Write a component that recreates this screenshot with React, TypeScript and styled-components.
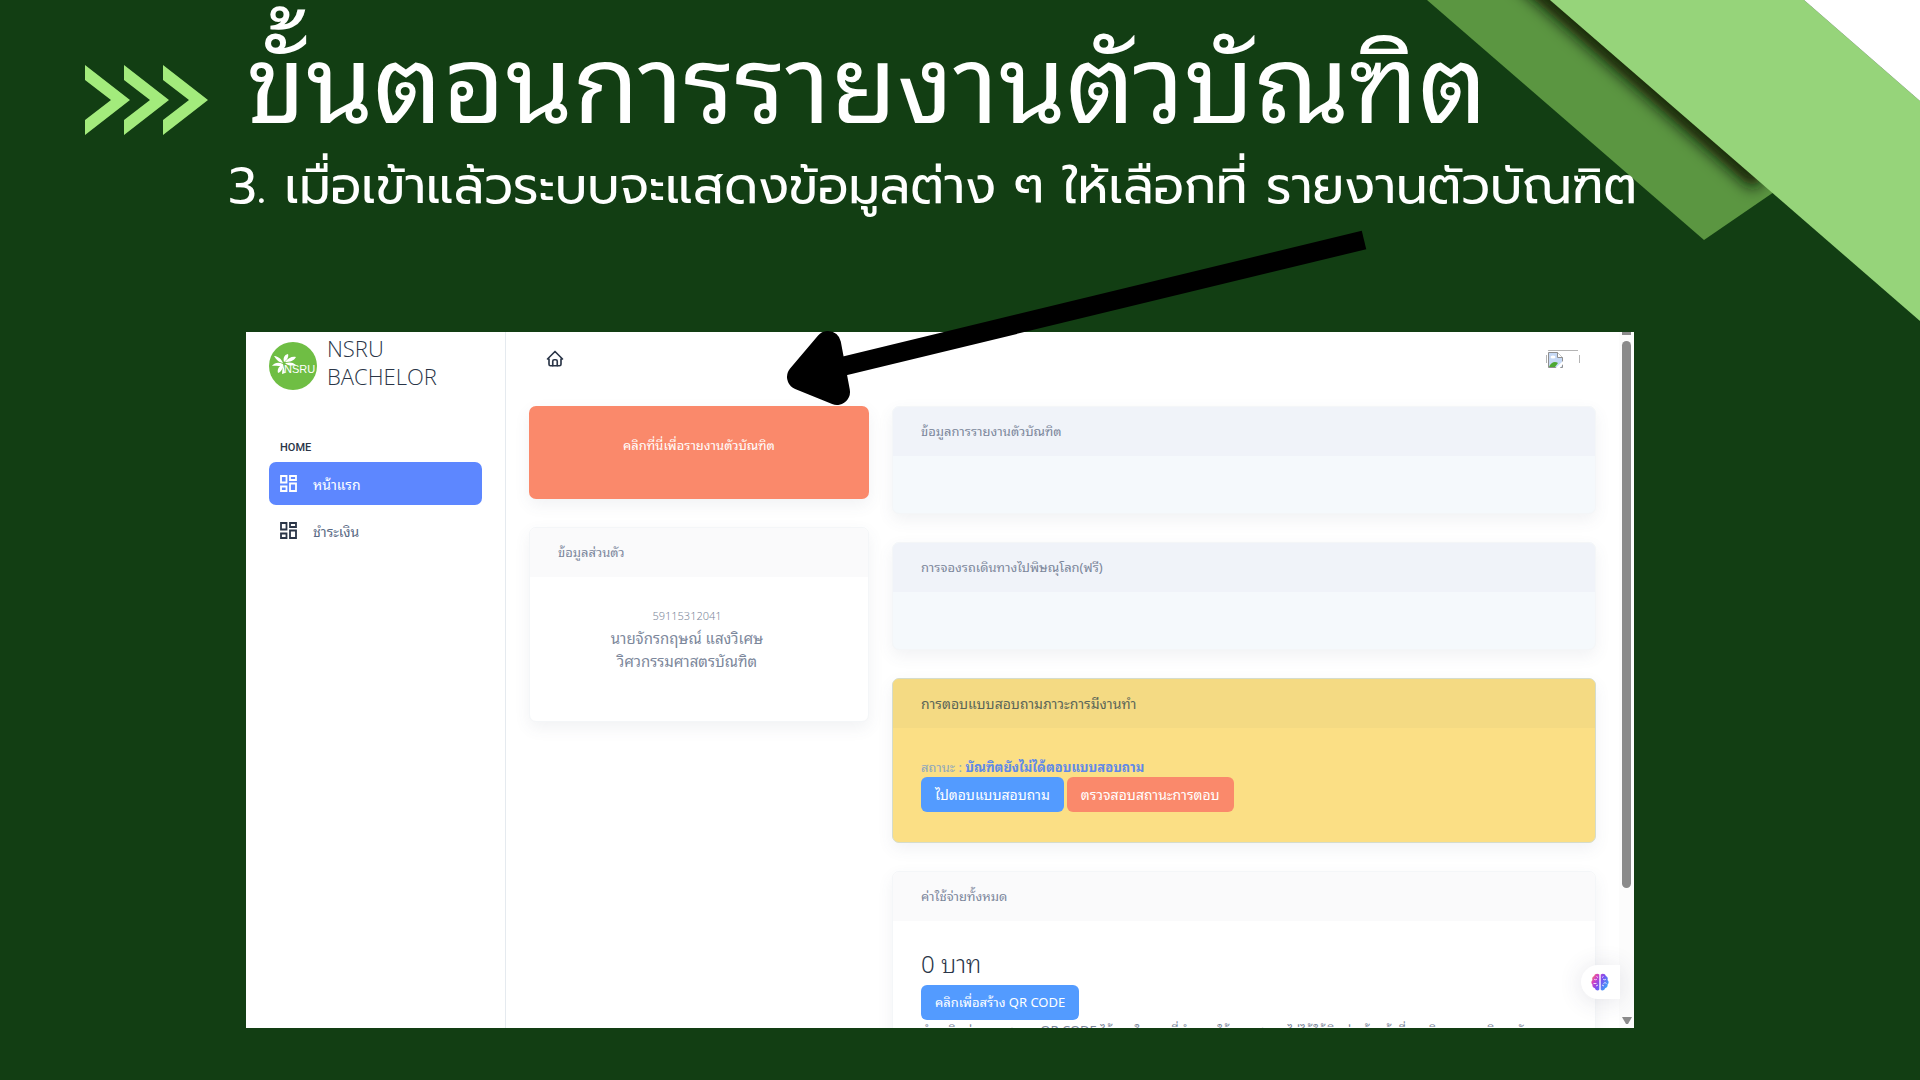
import React from "react";
import styled, { createGlobalStyle } from "styled-components";

const thai = `"Noto Sans Thai Looped", "Noto Looped Thai", "Sarabun", "Noto Sans", sans-serif`;
const loopless = `"Prompt", "Kanit", "Noto Sans", sans-serif`;

const Global = createGlobalStyle`
  * { box-sizing: border-box; }
  body { margin: 0; background: #123e13; font-family: ${thai}; }
  h1, h2, h3, p { margin: 0; font-weight: 400; }
`;

const Slide = styled.main`
  position: relative;
  display: flex;
  flex-direction: column;
  height: 100vh;
  min-height: 720px;
  overflow: hidden;
  background: #123e13;
`;
const Corner = styled.svg`
  position: absolute;
  top: 0;
  right: 0;
`;
const Heading = styled.header`
  position: relative;
  flex: none;
  height: 332px;
  padding-left: 85px;
`;
const TitleRow = styled.div`
  display: flex;
  align-items: center;
  gap: 38px;
  height: 150px;
  padding-top: 50px;
`;
const Title = styled.h1`
  padding-bottom: 50px;
  color: #fff;
  font-size: 108px;
  line-height: 80px;
  white-space: nowrap;
`;
const Subtitle = styled.h2`
  padding-left: 143px;
  color: #fff;
  font-family: ${loopless};
  font-size: 50px;
  line-height: 72px;
  white-space: nowrap;
`;
const Arrow = styled.svg`
  position: absolute;
  left: 780px;
  top: 224px;
  z-index: 3;
`;
const Shot = styled.section`
  position: relative;
  flex: 1;
  min-height: 0;
  display: flex;
  margin: 0 286px 52px 246px;
  overflow: hidden;
  background: #fff;
`;
const Sidebar = styled.nav`
  flex: none;
  width: 260px;
  padding: 4px 23px 0;
  border-right: 1px solid #e5eaef;
`;
const Brand = styled.div`
  display: flex;
  align-items: center;
  gap: 10px;
  height: 60px;
`;
const BrandName = styled.h3`
  padding-bottom: 8px;
  color: #2a3547;
  font-family: "Open Sans", sans-serif;
  font-weight: 300;
  font-size: 22px;
  line-height: 28px;
`;
const MenuLabel = styled.p`
  margin-top: 42px;
  padding-left: 11px;
  color: #2a3547;
  font-family: Roboto, sans-serif;
  font-weight: 500;
  font-size: 11px;
  line-height: 20px;
`;
const MenuLink = styled.a<{ $active?: boolean }>`
  display: flex;
  align-items: center;
  gap: 16px;
  height: 43px;
  margin: 4px 0 1px;
  padding-left: 11px;
  border-radius: 7px;
  background: ${(p) => (p.$active ? "#5d87ff" : "transparent")};
  color: ${(p) => (p.$active ? "#fff" : "#5a6a85")};
  font-size: 14px;
  text-decoration: none;
  svg { color: ${(p) => (p.$active ? "#fff" : "#2a3547")}; }
`;
const Content = styled.div`
  flex: 1;
  min-width: 0;
  padding: 0 23px;
`;
const Topbar = styled.div`
  display: flex;
  justify-content: space-between;
  padding: 18px 16px 0 17px;
  height: 74px;
`;
const HomeLink = styled.a`
  color: #2a3547;
  svg { display: block; }
`;
const Columns = styled.div`
  display: grid;
  grid-template-columns: minmax(0, 340fr) minmax(0, 704fr);
  gap: 23px;
`;
const Stack = styled.div`
  display: flex;
  flex-direction: column;
  gap: 28px;
`;
const ReportButton = styled.button`
  height: 93px;
  padding: 0 0 16px;
  border: 0;
  border-radius: 7px;
  background: #fa896b;
  box-shadow: 0 6px 16px rgba(80, 90, 110, 0.08);
  color: #fff;
  font-family: ${thai};
  font-size: 13px;
`;
type Tone = "plain" | "cool" | "warm";
const heads = { plain: "#fafafb", cool: "#f0f3f9", warm: "#f4da83" };
const bodies = { plain: "#fff", cool: "#f5f9fc", warm: "#fbdf85" };
const Card = styled.section<{ $tone: Tone }>`
  border: 1px solid ${(p) => (p.$tone === "warm" ? "#d5dccb" : "#f4f6f8")};
  border-radius: 7px;
  background: ${(p) => bodies[p.$tone]};
  box-shadow: 0 6px 16px rgba(80, 90, 110, 0.08);
  overflow: hidden;
`;
const CardHead = styled.h3<{ $tone: Tone }>`
  padding: 0 28px 2px;
  background: ${(p) => heads[p.$tone]};
  color: ${(p) => (p.$tone === "warm" ? "#5b6658" : "#7c879b")};
  font-size: ${(p) => (p.$tone === "warm" ? 14 : 13)}px;
  line-height: 47px;
`;
const CardBody = styled.div<{ $h: number }>`
  min-height: ${(p) => p.$h}px;
  padding: 29px 28px 28px;
`;
const Person = styled(CardBody)`
  padding: 29px 52px 0 28px;
  color: #7c879b;
  text-align: center;
  font-size: 15px;
  line-height: 23px;
`;
const StudentId = styled.p`
  font-family: "Noto Sans", sans-serif;
  font-weight: 300;
  font-size: 11px;
  line-height: 20px;
`;
const Status = styled.p`
  color: #8da6bd;
  font-size: 13px;
  line-height: 20px;
  b { color: #6089e8; }
`;
const Actions = styled.div`
  display: flex;
  gap: 3px;
`;
const Action = styled.button<{ $red?: boolean; $size: number }>`
  height: 35px;
  padding: 0 14px 2px;
  border: 0;
  border-radius: 6px;
  background: ${(p) => (p.$red ? "#fa896b" : "#539bff")};
  color: #fff;
  font-family: ${thai};
  font-size: ${(p) => p.$size}px;
  white-space: nowrap;
`;
const Amount = styled.p`
  padding-bottom: 11px;
  color: #2a3547;
  font-weight: 300;
  font-size: 24px;
  line-height: 24px;
`;
const Note = styled.p`
  color: #7c879b;
  font-size: 13px;
  line-height: 20px;
  white-space: nowrap;
`;
const Scroll = styled.div`
  flex: none;
  display: flex;
  flex-direction: column;
  align-items: center;
  width: 15px;
  padding-bottom: 3px;
  background: #fcfcfc;
`;
const ScrollCap = styled.div`
  width: 9px;
  height: 3px;
  background: #8b8b8b;
`;
const Thumb = styled.div`
  width: 9px;
  margin: 6px 0 auto;
  flex: 0 0 79%;
  border-radius: 5px;
  background: #8b8b8b;
`;
const Assistant = styled.button`
  position: absolute;
  right: 14px;
  bottom: 29px;
  width: 39px;
  height: 34px;
  padding: 0 0 0 10px;
  border: 0;
  border-radius: 17px 0 0 17px;
  background: #fff;
  box-shadow: 0 2px 24px rgba(60, 60, 90, 0.14);
  text-align: left;
  svg { display: block; }
`;

const GridIcon = () => (
  <svg width="17" height="17" viewBox="0 0 17 17" fill="none" stroke="currentColor" strokeWidth="1.8">
    <path d="M1 1h5.500v6.500H1zM1 11.500h5.500V16H1zM10 1h6v4h-6zM10 8.500h6V16h-6z" />
  </svg>
);
const HomeIcon = () => (
  <svg width="18" height="18" viewBox="0 0 24 24" fill="none" stroke="currentColor" strokeWidth="2.200" strokeLinecap="round" strokeLinejoin="round">
    <path d="M4 12H2l10-10 10 10h-2M4 12v7a2 2 0 0 0 2 2h12a2 2 0 0 0 2-2v-7" />
    <path d="M9 21v-6a2 2 0 0 1 2-2h2a2 2 0 0 1 2 2v6" />
  </svg>
);
const BrokenPicture = () => (
  <svg width="34" height="20" viewBox="0 0 34 20" role="img" aria-label="profile">
    <path d="M2 .5h30M.5 5v8M33.500 5v8" stroke="#b4b4b4" fill="none" />
    <path d="M2.500 2.500h9l5 5V17.500h-14z" fill="#c6d9f5" stroke="#8f8f8f" />
    <path d="M11.500 2.500v5h5" fill="#fff" stroke="#8f8f8f" />
    <ellipse cx="7" cy="7" rx="2.500" ry="1.500" fill="#fff" />
    <path d="M3 17c2-5 6-6 9-4l-3 4z" fill="#4da832" />
    <path d="M9 18.500l8.500-8v3l-4 5z" fill="#fff" />
  </svg>
);
const Logo = () => (
  <svg width="48" height="48" viewBox="0 0 48 48" role="img" aria-label="NSRU">
    <circle cx="24" cy="24" r="24" fill="#6fbe44" />
    <g fill="#fff">
      <path d="M14 22C10 20 6 20 3 24c4-1 6 1 11-1zM14 21C12 16 8 14 5 14c2 3 4 6 9 7zM15 20c-1-4 0-7 4-8 1 3-1 6-4 8zM16 20c3-4 7-6 11-5-2 4-6 5-11 5zM16 21c4-1 8-1 11 2-4 1-8 1-11-2zM14 22c-4 2-6 5-5 9 3-1 5-4 5-9zM14 22l2 9-3 1z" />
      <text x="15" y="31" fontFamily="Liberation Sans" fontSize="11">NSRU</text>
    </g>
  </svg>
);
const Brain = () => (
  <svg width="18" height="18" viewBox="0 0 18 18" aria-hidden="true">
    <defs>
      <linearGradient id="brain" x1="0" y1="0" x2="1" y2=".6">
        <stop offset="0" stopColor="#ff9a3c" />
        <stop offset=".3" stopColor="#d43fc4" />
        <stop offset=".6" stopColor="#7a4ff0" />
        <stop offset="1" stopColor="#3fa0f8" />
      </linearGradient>
    </defs>
    <path fill="url(#brain)" d="M8.300 1.500C6.500 0 3.500.8 3.200 3 1.200 3.600.8 5.800 1.500 7 0 8.300 0 10.500 1.400 11.500c-.3 2.200 1 3.500 2.500 3.700.8 2.400 3.400 2.800 4.400 1.300zM9.700 1.500c1.800-1.500 4.800-.7 5.100 1.500 2 .6 2.400 2.800 1.700 4 1.500 1.300 1.500 3.500.1 4.500.3 2.200-1 3.500-2.500 3.700-.8 2.400-3.400 2.800-4.400 1.300z" />
    <path d="M3 6c1 1 2 1 3 0M2.500 10.500h3M5 13l2-1M15 6c-1 1-2 1-3 0M15.500 10.500c-1-1-2-1-3 0M13 13l-2-1M5.500 3.500l1.500 1M12.500 3.500l-1.500 1" stroke="#fff" strokeWidth=".8" fill="none" />
  </svg>
);

export default function App() {
  return (
    <>
      <Global />
      <Slide>
        <Corner width="494" height="322" viewBox="1426 0 494 322" aria-hidden="true">
          <defs>
            <clipPath id="band">
              <path d="M1427 0L1704 240L1774 192L1550 0z" />
            </clipPath>
            <filter id="soft" filterUnits="userSpaceOnUse" x="1400" y="-100" width="500" height="400">
              <feGaussianBlur stdDeviation="8" />
            </filter>
          </defs>
          <path d="M1427 0L1704 240L1774 192L1550 0z" fill="#5b9641" />
          <g clipPath="url(#band)">
            <path d="M1492 -50L1760 182" stroke="#0a1405" strokeWidth="20" filter="url(#soft)" />
          </g>
          <path d="M1550 0H1804L1920 101V321z" fill="#96d47a" />
          <path d="M1804 0H1920V101z" fill="#fff" />
        </Corner>
        <Heading>
          <TitleRow>
            <svg width="123" height="70" viewBox="0 0 123 70" fill="#a3eb7c" aria-hidden="true">
              <path d="M0 0L45 35L0 70V55L26 35L0 15zM39 0L84 35L39 70V55L65 35L39 15zM78 0L123 35L78 70V55L104 35L78 15z" />
            </svg>
            <Title>ขั้นตอนการรายงานตัวบัณฑิต</Title>
          </TitleRow>
          <Subtitle>3. เมื่อเข้าแล้วระบบจะแสดงข้อมูลต่าง ๆ ให้เลือกที่ รายงานตัวบัณฑิต</Subtitle>
        </Heading>
        <Arrow width="590" height="190" viewBox="780 224 590 190" aria-hidden="true">
          <path d="M1364 240L840 367" stroke="#000" strokeWidth="19" />
          <path d="M800 377L828 344L837 392z" stroke="#000" strokeWidth="26" strokeLinejoin="round" />
        </Arrow>
        <Shot>
          <Sidebar>
            <Brand>
              <Logo />
              <BrandName>NSRU<br />BACHELOR</BrandName>
            </Brand>
            <MenuLabel>HOME</MenuLabel>
            <MenuLink href="#home" $active><GridIcon />หน้าแรก</MenuLink>
            <MenuLink href="#pay"><GridIcon />ชำระเงิน</MenuLink>
          </Sidebar>
          <Content>
            <Topbar>
              <HomeLink href="#top" aria-label="Home"><HomeIcon /></HomeLink>
              <BrokenPicture />
            </Topbar>
            <Columns>
              <Stack>
                <ReportButton>คลิกที่นี่เพื่อรายงานตัวบัณฑิต</ReportButton>
                <Card $tone="plain">
                  <CardHead $tone="plain">ข้อมูลส่วนตัว</CardHead>
                  <Person $h={144}>
                    <StudentId>59115312041</StudentId>
                    <p>นายจักรกฤษณ์ แสงวิเศษ</p>
                    <p>วิศวกรรมศาสตรบัณฑิต</p>
                  </Person>
                </Card>
              </Stack>
              <Stack>
                <Card $tone="cool">
                  <CardHead $tone="cool">ข้อมูลการรายงานตัวบัณฑิต</CardHead>
                  <CardBody $h={57} />
                </Card>
                <Card $tone="cool">
                  <CardHead $tone="cool">การจองรถเดินทางไปพิษณุโลก(ฟรี)</CardHead>
                  <CardBody $h={57} />
                </Card>
                <Card $tone="warm">
                  <CardHead $tone="warm">การตอบแบบสอบถามภาวะการมีงานทำ</CardHead>
                  <CardBody $h={114}>
                    <Status>สถานะ : <b>บัณฑิตยังไม่ได้ตอบแบบสอบถาม</b></Status>
                    <Actions>
                      <Action $size={14}>ไปตอบแบบสอบถาม</Action>
                      <Action $size={14} $red>ตรวจสอบสถานะการตอบ</Action>
                    </Actions>
                  </CardBody>
                </Card>
                <Card $tone="plain">
                  <CardHead $tone="plain">ค่าใช้จ่ายทั้งหมด</CardHead>
                  <CardBody $h={160}>
                    <Amount>0 บาท</Amount>
                    <Action $size={13}>คลิกเพื่อสร้าง QR CODE</Action>
                    <Note>ชำระเงินผ่านการสแกน QR CODE ได้ภายในเวลาที่กำหนดให้ หากสแกนไม่ได้ให้ติดต่อเจ้าหน้าที่การเงินของมหาวิทยาลัย</Note>
                  </CardBody>
                </Card>
              </Stack>
            </Columns>
          </Content>
          <Scroll aria-hidden="true">
            <ScrollCap />
            <Thumb />
            <svg width="10" height="8" viewBox="0 0 10 8"><path d="M0 0h10L6 7H4z" fill="#8b8b8b" /></svg>
          </Scroll>
          <Assistant aria-label="Assistant"><Brain /></Assistant>
        </Shot>
      </Slide>
    </>
  );
}
